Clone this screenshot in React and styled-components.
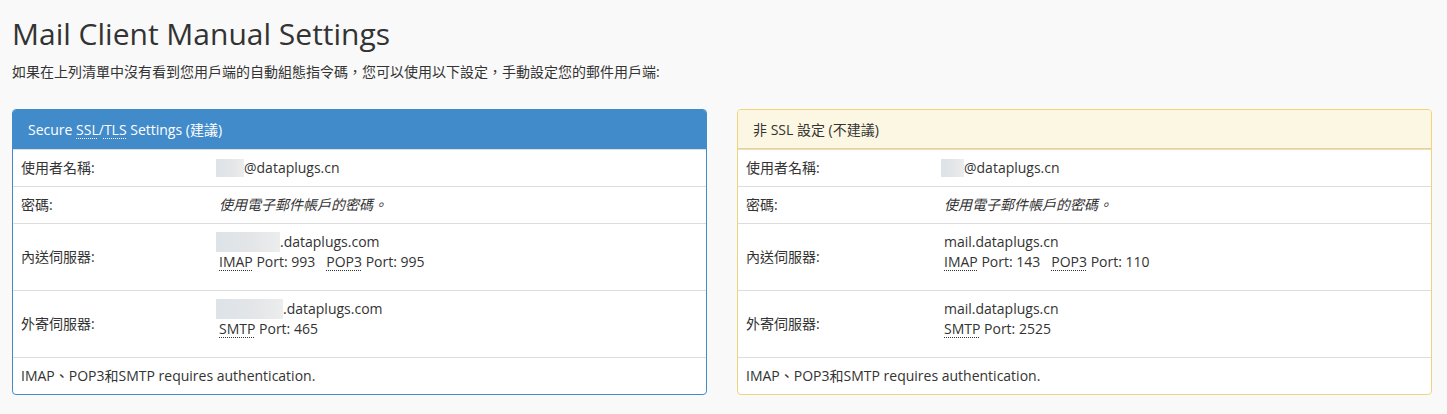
import React from "react";
import styled, { createGlobalStyle, css } from "styled-components";

const Global = createGlobalStyle`
  html, body { margin: 0; padding: 0; background: #f9f9f9; }
  body {
    font-family: "Open Sans", "Noto Sans CJK TC", sans-serif;
    font-size: 14px;
    line-height: 20px;
    color: #333;
  }
`;

const Page = styled.div`
  padding: 17px 15px 20px 12px;
`;

const Title = styled.h1`
  margin: 0;
  font-size: 30px;
  line-height: 33px;
  font-weight: 400;
  color: #333;
`;

const Intro = styled.p`
  margin: 12px 0 27px;
  height: 20px;
  font-size: 14px;
  line-height: 20px;
`;

const Columns = styled.div`
  display: grid;
  grid-template-columns: 1fr 1fr;
  gap: 30px;
`;

const themes = {
  primary: { border: "#428bca", head: "#428bca", headText: "#fff" },
  warning: { border: "#efd47c", head: "#fcf7e2", headText: "#333" },
};

const Panel = styled.section`
  border: 1px solid ${(p) => themes[p.$kind].border};
  border-radius: 4px;
  background: #fff;
  overflow: hidden;
`;

const Line = styled.div`
  display: flex;
  align-items: center;
  height: 20px;
  line-height: 20px;
  white-space: nowrap;
`;

const PanelHeading = styled(Line)`
  height: 20px;
  padding: 10px 15px 8px;
  background: ${(p) => themes[p.$kind].head};
  color: ${(p) => themes[p.$kind].headText};
  border-bottom: 1px solid ${(p) => themes[p.$kind].border};
`;

const Row = styled.div`
  display: grid;
  grid-template-columns: 198px 1fr;
  align-items: center;
  border-top: 1px solid #ddd;
  &:first-of-type { border-top: 0; }
`;

const Label = styled.div`
  padding: 8px;
`;

const Value = styled.div`
  padding: 8px;
  ${(p) => p.$tall && css`padding-bottom: 18px;`}
  ${(p) => p.$italic && css`font-style: italic;`}
`;

const Footer = styled.div`
  padding: 8px;
  border-top: 1px solid #ddd;
`;

const Abbr = styled.abbr`
  text-decoration: underline dotted;
  text-underline-offset: 3px;
  text-decoration-thickness: 1px;
  cursor: help;
`;

const PortGap = styled.span`
  display: inline-block;
  width: 11px;
`;

const Redacted = styled.span`
  display: inline-block;
  flex: none;
  width: ${(p) => p.$w}px;
  height: ${(p) => p.$h || 18}px;
  margin-left: -3px;
  background: linear-gradient(90deg, #dde3e8 0%, #e4e6e8 60%, #eceded 100%);
  filter: blur(0.6px);
`;

function SettingsPanel({ kind, title, redact, incomingHost, incomingPorts, outgoingHost, smtpPort }) {
  return (
    <Panel $kind={kind}>
      <PanelHeading $kind={kind}>{title}</PanelHeading>
      <Row>
        <Label><Line>使用者名稱:</Line></Label>
        <Value>
          <Line>{redact ? <Redacted $w={redact} $h={18} /> : null}@dataplugs.cn</Line>
        </Value>
      </Row>
      <Row>
        <Label><Line>密碼:</Line></Label>
        <Value $italic><Line>使用電子郵件帳戶的密碼。</Line></Value>
      </Row>
      <Row>
        <Label><Line>內送伺服器:</Line></Label>
        <Value $tall>
          <Line>{incomingHost}</Line>
          <Line>
            <Abbr title="Internet Message Access Protocol">IMAP</Abbr>&nbsp;Port: {incomingPorts[0]}
            <PortGap />
            <Abbr title="Post Office Protocol">POP3</Abbr>&nbsp;Port: {incomingPorts[1]}
          </Line>
        </Value>
      </Row>
      <Row>
        <Label><Line>外寄伺服器:</Line></Label>
        <Value $tall>
          <Line>{outgoingHost}</Line>
          <Line>
            <Abbr title="Simple Mail Transfer Protocol">SMTP</Abbr>&nbsp;Port: {smtpPort}
          </Line>
        </Value>
      </Row>
      <Footer><Line>IMAP、POP3和SMTP requires authentication.</Line></Footer>
    </Panel>
  );
}

export default function App() {
  return (
    <>
      <Global />
      <Page>
        <Title>Mail Client Manual Settings</Title>
        <Intro>如果在上列清單中沒有看到您用戶端的自動組態指令碼，您可以使用以下設定，手動設定您的郵件用戶端:</Intro>
        <Columns>
          <SettingsPanel
            kind="primary"
            title={
              <>
                Secure&nbsp;<Abbr title="Secure Sockets Layer">SSL</Abbr>/<Abbr title="Transport Layer Security">TLS</Abbr>&nbsp;Settings (建議)
              </>
            }
            redact={28}
            incomingHost={<><Redacted $w={64} $h={20} />.dataplugs.com</>}
            incomingPorts={[993, 995]}
            outgoingHost={<><Redacted $w={67} $h={20} />.dataplugs.com</>}
            smtpPort={465}
          />
          <SettingsPanel
            kind="warning"
            title="非 SSL 設定 (不建議)"
            redact={23}
            incomingHost="mail.dataplugs.cn"
            incomingPorts={[143, 110]}
            outgoingHost="mail.dataplugs.cn"
            smtpPort={2525}
          />
        </Columns>
      </Page>
    </>
  );
}
